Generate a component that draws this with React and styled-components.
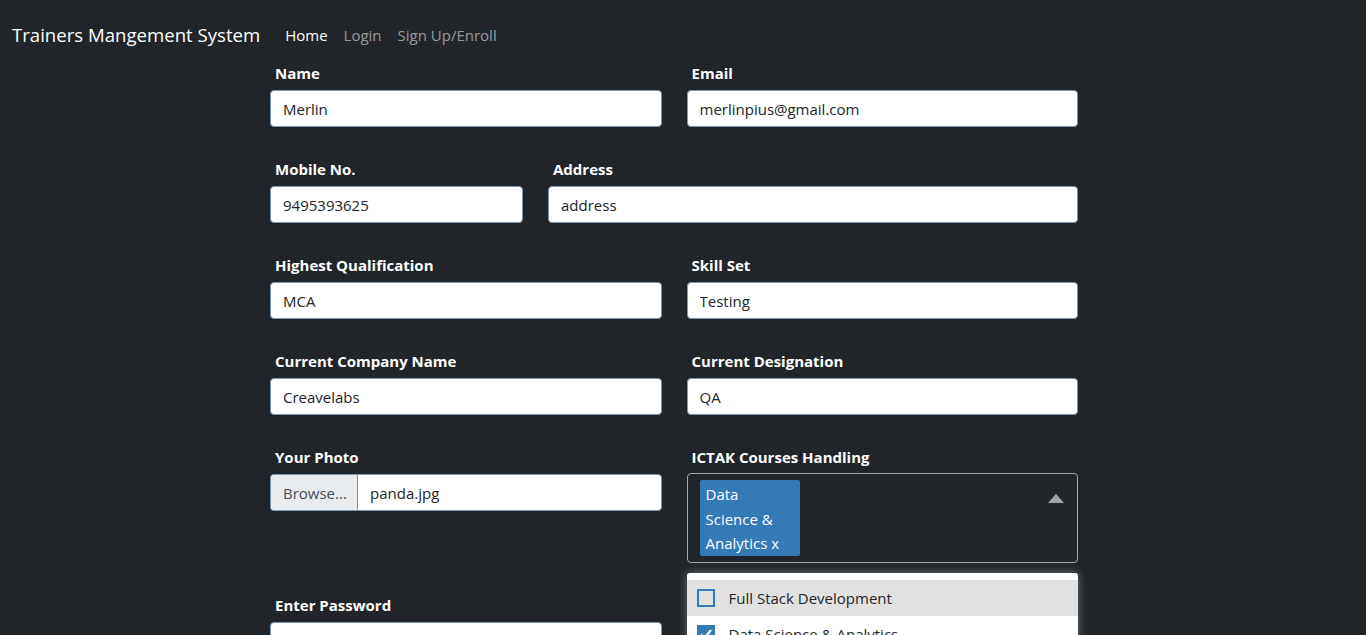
import React from 'react'
import styled, { createGlobalStyle } from 'styled-components'

const GlobalStyle = createGlobalStyle`
    html, body {
        margin: 0;
        background: #212529;
        font-family: "Open Sans", "Noto Sans", sans-serif;
        overflow: hidden;
    }
    * { box-sizing: border-box; }
`

function Field({ label, value, type }) {
    return (
        <FieldWrap>
            <Label>{label}</Label>
            <Input type={type || 'text'} defaultValue={value} />
        </FieldWrap>
    )
}

function App() {
    return (
        <>
            <GlobalStyle />
            <Nav>
                <Brand>Trainers Mangement System</Brand>
                <NavLink $active>Home</NavLink>
                <NavLink>Login</NavLink>
                <NavLink>Sign Up/Enroll</NavLink>
            </Nav>
            <Form>
                <Row>
                    <Field label="Name" value="Merlin" />
                    <Field label="Email" value="merlinpius@gmail.com" />
                </Row>
                <Row $cols="253px 1fr">
                    <Field label="Mobile No." value="9495393625" />
                    <Field label="Address" value="address" />
                </Row>
                <Row>
                    <Field label="Highest Qualification" value="MCA" />
                    <Field label="Skill Set" value="Testing" />
                </Row>
                <Row>
                    <Field label="Current Company Name" value="Creavelabs" />
                    <Field label="Current Designation" value="QA" />
                </Row>
                <Row>
                    <FieldWrap>
                        <Label>Your Photo</Label>
                        <FileBox>
                            <BrowseButton>Browse...</BrowseButton>
                            <FileName>panda.jpg</FileName>
                        </FileBox>
                    </FieldWrap>
                    <FieldWrap $relative>
                        <Label>ICTAK Courses Handling</Label>
                        <MultiBox>
                            <Chip>Data Science &amp; Analytics x</Chip>
                            <Caret viewBox="0 0 16 9" width="16" height="9">
                                <path d="M0 9 L8 0 L16 9 Z" fill="#a3a3a3" />
                            </Caret>
                        </MultiBox>
                        <Menu>
                            <MenuItem $hover>
                                <Check />
                                Full Stack Development
                            </MenuItem>
                            <MenuItem>
                                <Check $checked>
                                    <svg viewBox="0 0 18 18" width="18" height="18">
                                        <path d="M4 9.5 L7.5 13 L14 5" stroke="#fff" strokeWidth="2.4" fill="none" />
                                    </svg>
                                </Check>
                                Data Science &amp; Analytics
                            </MenuItem>
                            <MenuItem>
                                <Check />
                                Cyber Security Analyst
                            </MenuItem>
                        </Menu>
                    </FieldWrap>
                </Row>
                <Row>
                    <Field label="Enter Password" value="" type="password" />
                    <div />
                </Row>
            </Form>
        </>
    )
}

export default App

const Nav = styled.nav`
    display: flex;
    align-items: center;
    padding: 20px 12px 0;
    height: 50px;
`
const Brand = styled.span`
    color: #fff;
    font-size: 18.6px;
    line-height: 30px;
    margin-right: 17px;
`
const NavLink = styled.a`
    color: ${p => (p.$active ? '#fff' : 'rgba(255,255,255,0.55)')};
    font-size: 15px;
    padding: 0 8px;
    cursor: pointer;
`
const Form = styled.form`
    width: 808px;
    margin: 12px 0 0 270px;
    display: flex;
    flex-direction: column;
    gap: 31px;
`
const Row = styled.div`
    display: grid;
    grid-template-columns: ${p => p.$cols || '1fr 1fr'};
    column-gap: 25px;
    align-items: start;
`
const FieldWrap = styled.div`
    display: flex;
    flex-direction: column;
    position: ${p => (p.$relative ? 'relative' : 'static')};
`
const Label = styled.label`
    color: #fff;
    font-weight: 700;
    font-size: 15px;
    line-height: 22px;
    padding-left: 5px;
    margin-bottom: 6px;
`
const Input = styled.input`
    height: 37px;
    border: 1px solid #7896b4;
    border-radius: 4px;
    padding: 0 12px;
    font-family: inherit;
    font-size: 15px;
    color: #212529;
    background: #fff;
    outline: none;
`
const FileBox = styled.div`
    display: flex;
    height: 37px;
    border: 1px solid #7896b4;
    border-radius: 4px;
    background: #fff;
    overflow: hidden;
`
const BrowseButton = styled.span`
    display: flex;
    align-items: center;
    padding: 0 12px;
    width: 87px;
    background: #e9ecef;
    color: #495057;
    font-size: 15px;
    border-right: 1px solid #7896b4;
`
const FileName = styled.span`
    display: flex;
    align-items: center;
    padding-left: 12px;
    font-size: 15px;
    color: #212529;
`
const MultiBox = styled.div`
    display: flex;
    justify-content: space-between;
    align-items: flex-start;
    margin-top: -1px;
    height: 90px;
    border: 1px solid #a6a6a6;
    border-radius: 4px;
    padding: 6px 12px 7px;
`
const Chip = styled.span`
    width: 100px;
    padding: 2px 6px 0;
    background: #337ab7;
    color: #fff;
    font-size: 15px;
    line-height: 24.5px;
    border-radius: 2px;
`
const Caret = styled.svg`
    margin-top: 14px;
    margin-right: 1px;
`
const Menu = styled.div`
    position: absolute;
    top: 127px;
    left: 0;
    right: 0;
    background: #fff;
    border-radius: 3px;
    padding-top: 7px;
    box-shadow: 0 0 10px rgba(255, 255, 255, 0.35);
    z-index: 5;
`
const MenuItem = styled.div`
    display: flex;
    align-items: center;
    gap: 14px;
    height: 36px;
    padding-left: 10px;
    font-size: 15px;
    color: #212529;
    background: ${p => (p.$hover ? '#e1e1e1' : '#fff')};
`
const Check = styled.span`
    display: flex;
    width: 18px;
    height: 18px;
    border: 2px solid #337ab7;
    background: ${p => (p.$checked ? '#337ab7' : 'transparent')};
    align-items: center;
    justify-content: center;
    & svg { margin: -2px; }
`
